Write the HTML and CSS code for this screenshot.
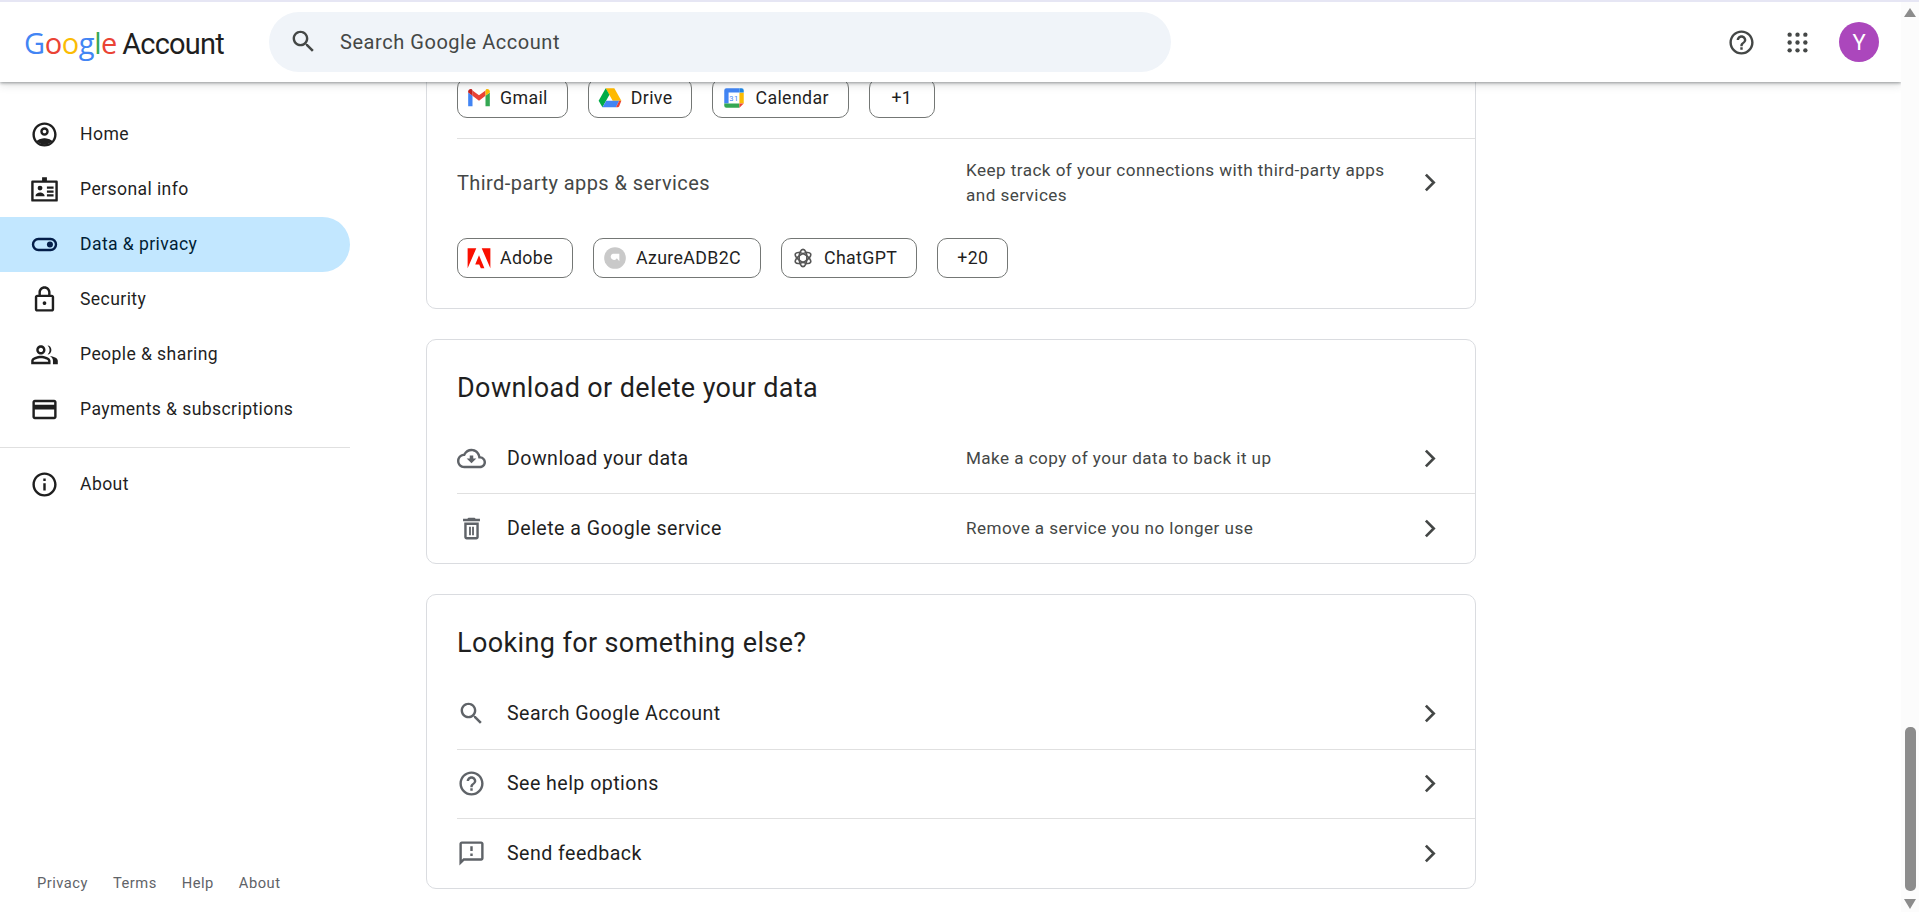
FILE: index.html
```html
<!DOCTYPE html>
<html lang="en">
<head>
  <meta charset="UTF-8">
  <title>Data &amp; privacy - Google Account</title>
  <link rel="stylesheet" href="styles.css">
</head>
<body>
  <div class="page">
    <header class="topbar">
      <a class="logo"><span class="logo-word"><span class="c-blue">G</span><span class="c-red">o</span><span class="c-yellow">o</span><span class="c-blue">g</span><span class="c-green">l</span><span class="c-red">e</span></span> <span class="logo-name">Account</span></a>
      <div class="search">
        <svg class="icon search-icon" viewBox="0 0 24 24"><path d="M15.5 14h-.79l-.28-.27C15.41 12.59 16 11.11 16 9.5 16 5.91 13.09 3 9.5 3S3 5.91 3 9.5 5.91 16 9.5 16c1.61 0 3.09-.59 4.23-1.57l.27.28v.79l5 4.99L20.49 19l-4.99-5zm-6 0C7.01 14 5 11.99 5 9.5S7.01 5 9.5 5 14 7.01 14 9.5 11.99 14 9.5 14z"/></svg>
        <span>Search Google Account</span>
      </div>
      <div class="top-actions">
        <svg class="icon top-icon" viewBox="0 0 24 24"><path d="M11 18h2v-2h-2v2zm1-16C6.48 2 2 6.48 2 12s4.48 10 10 10 10-4.48 10-10S17.52 2 12 2zm0 18c-4.41 0-8-3.59-8-8s3.59-8 8-8 8 3.59 8 8-3.59 8-8 8zm0-14c-2.21 0-4 1.79-4 4h2c0-1.1.9-2 2-2s2 .9 2 2c0 2-3 1.75-3 5h2c0-2.25 3-2.5 3-5 0-2.21-1.79-4-4-4z"/></svg>
        <svg class="icon top-icon" viewBox="0 0 24 24"><circle cx="5.500" cy="5.500" r="1.800"/><circle cx="12" cy="5.500" r="1.800"/><circle cx="18.500" cy="5.500" r="1.800"/><circle cx="5.500" cy="12" r="1.800"/><circle cx="12" cy="12" r="1.800"/><circle cx="18.500" cy="12" r="1.800"/><circle cx="5.500" cy="18.500" r="1.800"/><circle cx="12" cy="18.500" r="1.800"/><circle cx="18.500" cy="18.500" r="1.800"/></svg>
        <div class="avatar">Y</div>
      </div>
    </header>

    <div class="content">
      <aside class="sidebar">
        <nav>
          <a class="nav-item">
            <svg class="icon" viewBox="0 0 24 24"><path d="M12 2C6.48 2 2 6.48 2 12s4.48 10 10 10 10-4.48 10-10S17.52 2 12 2zM7 18.6c1.3-1 3-1.6 5-1.6s3.700.6 5 1.600C15.600 19.500 13.900 20 12 20s-3.600-.5-5-1.400zm11.300-1.500C16.600 15.800 14.400 15 12 15s-4.600.8-6.300 2.100C4.600 15.700 4 13.900 4 12c0-4.420 3.580-8 8-8s8 3.580 8 8c0 1.900-.6 3.700-1.700 5.100z"/><path d="M12 6c-1.930 0-3.500 1.570-3.500 3.500S10.070 13 12 13s3.500-1.570 3.500-3.500S13.930 6 12 6zm0 5c-.83 0-1.500-.67-1.500-1.500S11.170 8 12 8s1.500.67 1.500 1.500S12.830 11 12 11z"/><path d="M6 17.500C7.500 16.200 9.600 15.600 12 15.600s4.500.6 6 1.900C16.500 19.200 14.400 20.500 12 20.500s-4.500-1.300-6-3z"/></svg>
            <span>Home</span>
          </a>
          <a class="nav-item">
            <svg class="icon" viewBox="0 0 24 24"><path d="M10 1.800h4v2.700h8a1 1 0 0 1 1 1V21a1 1 0 0 1-1 1H2a1 1 0 0 1-1-1V5.500a1 1 0 0 1 1-1h8zM3 6.500V20h18V6.500z"/><circle cx="8.300" cy="10.800" r="2"/><path d="M4.500 17.500c0-2 2.100-3 3.800-3s3.800 1 3.800 3zM14 9.500h5.500v1.800H14zM14 12.800h5.500v1.800H14zM14 16h5.500v1.800H14z"/></svg>
            <span>Personal info</span>
          </a>
          <a class="nav-item active">
            <svg class="icon" viewBox="0 0 24 24"><path d="M7 6.500h10a5.500 5.500 0 0 1 0 11H7a5.500 5.500 0 0 1 0-11zm0 2a3.500 3.500 0 0 0 0 7h10a3.500 3.500 0 0 0 0-7z"/><circle cx="16.500" cy="12" r="2.500"/></svg>
            <span>Data &amp; privacy</span>
          </a>
          <a class="nav-item">
            <svg class="icon" viewBox="0 0 24 24"><path d="M18 8h-1V6c0-2.760-2.240-5-5-5S7 3.240 7 6v2H6c-1.100 0-2 .9-2 2v10c0 1.100.9 2 2 2h12c1.100 0 2-.9 2-2V10c0-1.100-.9-2-2-2zM9 6c0-1.660 1.340-3 3-3s3 1.340 3 3v2H9V6zm9 14H6V10h12v10zm-6-3.500c.83 0 1.500-.67 1.500-1.500s-.67-1.500-1.500-1.500-1.500.67-1.500 1.500.67 1.500 1.500 1.500z"/></svg>
            <span>Security</span>
          </a>
          <a class="nav-item">
            <svg class="icon" viewBox="0 0 24 24"><path d="M9 12c2.100 0 3.800-1.700 3.800-3.800S11.100 4.400 9 4.400 5.200 6.100 5.200 8.200 6.900 12 9 12zm0-5.600c1 0 1.800.8 1.800 1.800S10 10 9 10s-1.800-.8-1.800-1.800S8 6.400 9 6.400zM9 13c-2.700 0-8 1.400-8 4.200V20h16v-2.800C17 14.400 11.700 13 9 13zm-6 5v-.8c0-.9 3.400-2.200 6-2.200s6 1.300 6 2.200v.8z"/><path d="M14.500 4.500c1.800 0 3.200 1.600 3.200 3.700s-1.400 3.700-3.200 3.700c1.100-.9 1.700-2.300 1.700-3.700s-.6-2.800-1.700-3.700zM16.500 13.300c2.600.4 6.500 1.500 6.500 3.900V20h-4v-2.800c0-1.600-1-3-2.500-3.900z"/></svg>
            <span>People &amp; sharing</span>
          </a>
          <a class="nav-item">
            <svg class="icon" viewBox="0 0 24 24"><path d="M20 4H4c-1.110 0-1.990.89-1.990 2L2 18c0 1.110.89 2 2 2h16c1.110 0 2-.89 2-2V6c0-1.110-.89-2-2-2zm0 14H4v-6h16v6zm0-10H4V6h16v2z"/></svg>
            <span>Payments &amp; subscriptions</span>
          </a>
          <hr class="nav-line">
          <a class="nav-item">
            <svg class="icon" viewBox="0 0 24 24"><path d="M11 7h2v2h-2zm0 4h2v6h-2zm1-9C6.480 2 2 6.480 2 12s4.480 10 10 10 10-4.480 10-10S17.520 2 12 2zm0 18c-4.410 0-8-3.590-8-8s3.590-8 8-8 8 3.590 8 8-3.590 8-8 8z"/></svg>
            <span>About</span>
          </a>
        </nav>
        <footer class="side-footer">
          <a>Privacy</a>
          <a>Terms</a>
          <a>Help</a>
          <a>About</a>
        </footer>
      </aside>

      <main class="main">
        <section class="card card-first">
          <div class="chips chips-top">
            <div class="chip">
              <svg class="chip-icon" viewBox="0 0 24 24"><path fill="#4285f4" d="M2 19.500h4V10L2 7z"/><path fill="#34a853" d="M18 19.500h4V7l-4 3z"/><path fill="#ea4335" d="M6 10V5l6 4.500L18 5v5l-6 4.500z"/><path fill="#fbbc04" d="M18 5v5l4-3V6c0-1.800-2.100-2.900-3.600-1.800z"/><path fill="#c5221f" d="M2 7l4 3V5l-.4-.8C4.100 3.100 2 4.200 2 6z"/></svg>
              <span>Gmail</span>
            </div>
            <div class="chip">
              <svg class="chip-icon" viewBox="0 0 24 24"><path fill="#ffba00" d="M8 3h8l6.500 11.500h-8z"/><path fill="#00ac47" d="M8 3L1.500 14.500 5 20.500 11.500 9z"/><path fill="#4285f4" d="M5 20.500h12.500l3-6H8.500z"/><path fill="#ea4335" d="M17.500 20.500H19c.7 0 1.200-.3 1.500-.8l2-5.200h-2z"/></svg>
              <span>Drive</span>
            </div>
            <div class="chip">
              <svg class="chip-icon" viewBox="0 0 24 24"><path fill="#4285f4" d="M5 3h12v4H7v10H3V5a2 2 0 0 1 2-2z"/><path fill="#fbbc04" d="M17 7h4v10h-4z"/><path fill="#34a853" d="M7 17h10v4H5a2 2 0 0 1-2-2v-2z"/><path fill="#1e88e5" d="M17 3h2a2 2 0 0 1 2 2v2h-4z"/><path fill="#ea4335" d="M17 17h4l-4 4z"/><text class="cal-day" x="12" y="15" text-anchor="middle">31</text></svg>
              <span>Calendar</span>
            </div>
            <div class="chip chip-more"><span>+1</span></div>
          </div>
          <div class="row row-chips">
            <span class="row-title">Third-party apps &amp; services</span>
            <span class="row-desc">Keep track of your connections with third-party apps and services</span>
            <svg class="chevron" viewBox="0 0 24 24"><path d="M9 5.500l6.500 6.500L9 18.500"/></svg>
          </div>
          <div class="chips chips-bottom">
            <div class="chip">
              <svg class="chip-icon" viewBox="0 0 24 24"><path fill="#fa0f00" d="M1.500 3h8L1.500 21.500zM22.500 3h-8l8 18.500zM12 9.500l5 12h-3.300L12.200 18H8.500z"/></svg>
              <span>Adobe</span>
            </div>
            <div class="chip">
              <svg class="chip-icon" viewBox="0 0 24 24"><circle cx="12" cy="12" r="10" fill="#c9c9c9"/><path fill="#fff" d="M10 8h6v7l-2.300-2.800a3 3 0 1 1-3.700-4.200z"/></svg>
              <span>AzureADB2C</span>
            </div>
            <div class="chip">
              <svg class="chip-icon knot" viewBox="0 0 24 24"><ellipse cx="12" cy="12" rx="3.600" ry="8"/><ellipse cx="12" cy="12" rx="3.600" ry="8" transform="rotate(60 12 12)"/><ellipse cx="12" cy="12" rx="3.600" ry="8" transform="rotate(120 12 12)"/></svg>
              <span>ChatGPT</span>
            </div>
            <div class="chip chip-more"><span>+20</span></div>
          </div>
        </section>

        <section class="card">
          <h2 class="card-title">Download or delete your data</h2>
          <div class="row">
            <svg class="icon row-icon" viewBox="0 0 24 24"><path d="M19.350 10.040C18.670 6.590 15.640 4 12 4 9.110 4 6.600 5.640 5.350 8.040 2.340 8.360 0 10.910 0 14c0 3.310 2.690 6 6 6h13c2.760 0 5-2.240 5-5 0-2.640-2.050-4.780-4.650-4.960zM19 18H6c-2.210 0-4-1.790-4-4 0-2.050 1.530-3.760 3.560-3.970l1.070-.11.5-.95C8.080 7.140 9.940 6 12 6c2.620 0 4.880 1.860 5.390 4.430l.3 1.500 1.530.11c1.560.1 2.780 1.410 2.780 2.960 0 1.650-1.350 3-3 3zm-5.550-8.500h-2.900V12H8l4 4 4-4h-2.550z"/></svg>
            <span class="row-name">Download your data</span>
            <span class="row-desc">Make a copy of your data to back it up</span>
            <svg class="chevron" viewBox="0 0 24 24"><path d="M9 5.500l6.500 6.500L9 18.500"/></svg>
          </div>
          <div class="row">
            <svg class="icon row-icon" viewBox="0 0 24 24"><path d="M6 19c0 1.100.9 2 2 2h8c1.100 0 2-.9 2-2V7H6v12zM8 9h8v10H8V9zm7.500-5l-1-1h-5l-1 1H5v2h14V4zM10 10.500h1.500v7H10zM12.500 10.500H14v7h-1.500z"/></svg>
            <span class="row-name">Delete a Google service</span>
            <span class="row-desc">Remove a service you no longer use</span>
            <svg class="chevron" viewBox="0 0 24 24"><path d="M9 5.500l6.500 6.500L9 18.500"/></svg>
          </div>
        </section>

        <section class="card">
          <h2 class="card-title card-title-tall">Looking for something else?</h2>
          <div class="row">
            <svg class="icon row-icon" viewBox="0 0 24 24"><path d="M15.500 14h-.79l-.28-.27C15.410 12.590 16 11.110 16 9.500 16 5.910 13.090 3 9.500 3S3 5.910 3 9.500 5.910 16 9.500 16c1.610 0 3.090-.59 4.230-1.570l.27.28v.79l5 4.990L20.490 19l-4.990-5zm-6 0C7.010 14 5 11.990 5 9.500S7.010 5 9.500 5 14 7.010 14 9.500 11.990 14 9.500 14z"/></svg>
            <span class="row-name">Search Google Account</span>
            <svg class="chevron" viewBox="0 0 24 24"><path d="M9 5.500l6.500 6.500L9 18.500"/></svg>
          </div>
          <div class="row">
            <svg class="icon row-icon" viewBox="0 0 24 24"><path d="M11 18h2v-2h-2v2zm1-16C6.480 2 2 6.480 2 12s4.480 10 10 10 10-4.480 10-10S17.520 2 12 2zm0 18c-4.410 0-8-3.590-8-8s3.590-8 8-8 8 3.590 8 8-3.590 8-8 8zm0-14c-2.210 0-4 1.790-4 4h2c0-1.100.9-2 2-2s2 .9 2 2c0 2-3 1.750-3 5h2c0-2.250 3-2.500 3-5 0-2.210-1.790-4-4-4z"/></svg>
            <span class="row-name">See help options</span>
            <svg class="chevron" viewBox="0 0 24 24"><path d="M9 5.500l6.500 6.500L9 18.500"/></svg>
          </div>
          <div class="row">
            <svg class="icon row-icon" viewBox="0 0 24 24"><path d="M20 2H4c-1.100 0-2 .9-2 2v18l4-4h14c1.100 0 2-.9 2-2V4c0-1.100-.9-2-2-2zm0 14H5.170L4 17.170V4h16v12zM11 12h2v2h-2zm0-6h2v4h-2z"/></svg>
            <span class="row-name">Send feedback</span>
            <svg class="chevron" viewBox="0 0 24 24"><path d="M9 5.500l6.500 6.500L9 18.500"/></svg>
          </div>
        </section>
      </main>
    </div>
  </div>

  <div class="scrollbar">
    <span class="arrow-up"></span>
    <span class="thumb"></span>
    <span class="arrow-down"></span>
  </div>
</body>
</html>
```

FILE: styles.css
```css
* {
  box-sizing: border-box;
}
body {
  margin: 0;
  height: 912px;
  overflow: hidden;
  display: flex;
  font-family: Roboto, Arial, sans-serif;
  color: #1f1f1f;
  background-color: #fff;
}
.page {
  flex: 1;
  min-width: 0;
  display: flex;
  flex-direction: column;
}

/* top bar */
.topbar {
  height: 82px;
  flex-shrink: 0;
  display: flex;
  align-items: center;
  background-color: #fff;
  border-top: 2px solid #e6e6f4;
  box-shadow: 0 1px 3px rgba(60, 64, 67, 0.5), 0 4px 8px rgba(60, 64, 67, 0.12);
  clip-path: inset(0 0 -12px 0);
  position: relative;
  z-index: 2;
}
.logo {
  width: 269px;
  padding-left: 24px;
  font-size: 29px;
  white-space: nowrap;
}
.logo-word {
  font-family: "Open Sans", Roboto, sans-serif;
  font-weight: 500;
  letter-spacing: -0.4px;
  margin-right: -2px;
}
.logo-name {
  letter-spacing: -0.8px;
}
.c-blue { color: #4285f4; }
.c-red { color: #ea4335; }
.c-yellow { color: #fbbc05; }
.c-green { color: #34a853; }
.search {
  width: 902px;
  height: 60px;
  border-radius: 30px;
  background-color: #f0f4f9;
  display: flex;
  align-items: center;
  padding-left: 20px;
  padding-bottom: 1px;
  gap: 22px;
  font-size: 20px;
  letter-spacing: 0.55px;
  color: #444746;
}
.icon {
  width: 29px;
  height: 29px;
  flex-shrink: 0;
  fill: #1f1f1f;
}
.search-icon {
  fill: #444746;
}
.top-actions {
  margin-left: auto;
  display: flex;
  align-items: center;
  padding-right: 22px;
  gap: 27px;
}
.top-icon {
  fill: #444746;
}
.avatar {
  width: 40px;
  height: 40px;
  border-radius: 50%;
  background-color: #ab47bc;
  color: #fff;
  font-size: 22px;
  display: flex;
  align-items: center;
  justify-content: center;
}

/* sidebar */
.content {
  flex: 1;
  min-height: 0;
  display: flex;
}
.sidebar {
  width: 350px;
  flex-shrink: 0;
  display: flex;
  flex-direction: column;
  padding-top: 25px;
}
.nav-item {
  height: 55px;
  display: flex;
  align-items: center;
  gap: 21px;
  padding-left: 30px;
  font-size: 17.6px;
  letter-spacing: 0.4px;
  border-radius: 0 27.5px 27.5px 0;
}
.nav-item span {
  margin-bottom: 2px;
}
.nav-item.active {
  background-color: #c2e7ff;
  color: #001d35;
}
.nav-item.active .icon {
  fill: #041e49;
}
.nav-line {
  margin: 10px 0 9px;
  border: none;
  border-top: 1px solid #e0e0e0;
}
.side-footer {
  margin-top: auto;
  height: 38px;
  display: flex;
  padding-left: 37px;
  gap: 25px;
  font-size: 14.7px;
  letter-spacing: 0.5px;
  color: #5f6368;
}

/* cards */
.main {
  flex: 1;
  min-width: 0;
  padding-left: 76px;
  display: flex;
  flex-direction: column;
  gap: 30px;
}
.card {
  width: 1050px;
  border: 1px solid #dadce0;
  border-radius: 10px;
  padding-left: 30px;
}
.card-first {
  margin-top: -11px;
  padding-top: 6px;
}
.card-title {
  margin: 0;
  height: 83.5px;
  padding-top: 32px;
  font-size: 27px;
  line-height: 32px;
  font-weight: 400;
  letter-spacing: 0.38px;
}
.card-title-tall {
  height: 84.5px;
}
.row {
  height: 69.5px;
  display: flex;
  align-items: center;
  border-top: 1px solid #e0e0e0;
}
.card-title + .row {
  border-top: none;
}
.row-icon {
  fill: #5f6368;
  margin-right: 21px;
}
.row-title {
  width: 509px;
  font-size: 20px;
  letter-spacing: 0.43px;
  color: #444746;
}
.row-name {
  width: 459px;
  font-size: 19.6px;
  letter-spacing: 0.45px;
}
.row-desc {
  width: 445px;
  font-size: 17.1px;
  letter-spacing: 0.45px;
  line-height: 25px;
  color: #444746;
}
.chevron {
  width: 29px;
  height: 29px;
  margin-left: auto;
  margin-right: 31px;
  fill: none;
  stroke: #444746;
  stroke-width: 2.2;
}
.row-chips {
  height: 88px;
}

/* chips */
.chips {
  display: flex;
  gap: 20px;
}
.chips-top {
  padding-bottom: 20px;
}
.chips-bottom {
  padding-top: 12px;
  padding-bottom: 30px;
}
.chip {
  height: 40px;
  display: flex;
  align-items: center;
  gap: 8px;
  padding: 0 19px 1px 8px;
  border: 1px solid #747775;
  border-radius: 10px;
  font-size: 17.8px;
  letter-spacing: 0.35px;
}
.chip-more {
  padding: 0 19px 1px;
  min-width: 66px;
  justify-content: center;
}
.chip-icon {
  width: 26px;
  height: 26px;
  flex-shrink: 0;
}
.knot {
  fill: none;
  stroke: #555;
  stroke-width: 1.500;
}
.cal-day {
  font-size: 7px;
  fill: #4285f4;
}

/* window scrollbar */
.scrollbar {
  width: 18px;
  flex-shrink: 0;
  background-color: #fcfcfc;
  border-top: 2px solid #e6e6f4;
  display: flex;
  flex-direction: column;
  align-items: center;
  padding: 6px 0 3px;
}
.arrow-up {
  border: 6.5px solid transparent;
  border-top: none;
  border-bottom: 9px solid #8c8c8c;
}
.thumb {
  margin-top: auto;
  width: 11px;
  height: 164px;
  border-radius: 5px;
  background-color: #8c8c8c;
}
.arrow-down {
  margin-top: 8px;
  border: 6.5px solid transparent;
  border-bottom: none;
  border-top: 10px solid #8c8c8c;
}
```
